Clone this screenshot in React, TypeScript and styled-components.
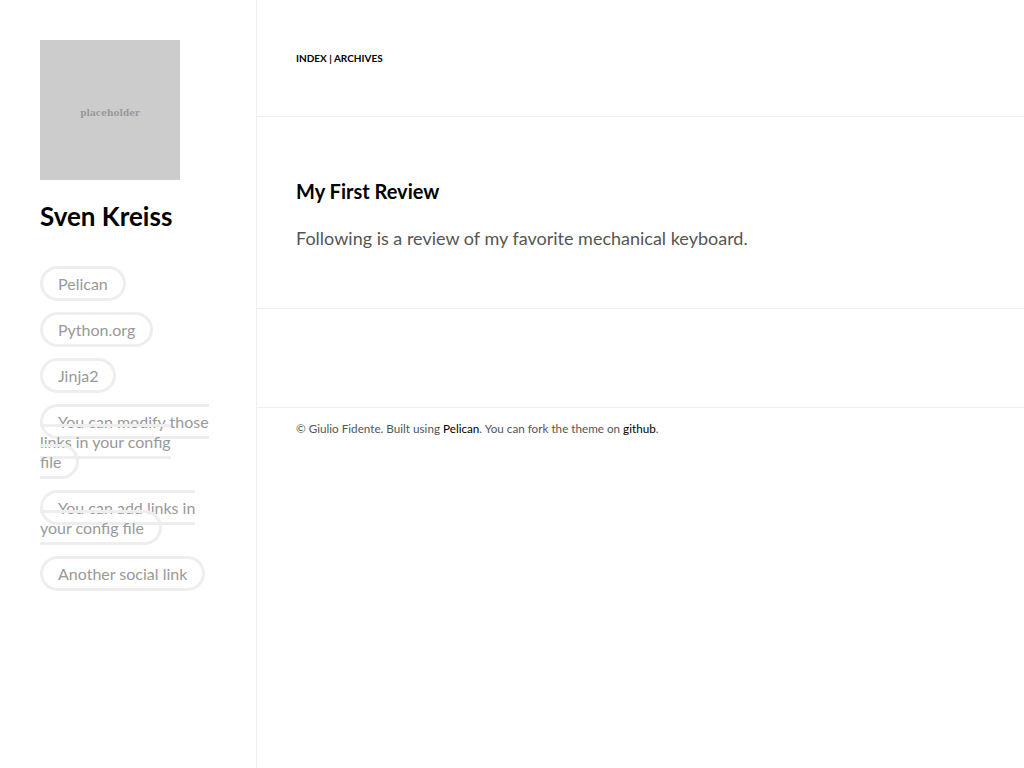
import React from "react";
import styled, { createGlobalStyle } from "styled-components";

const GlobalStyle = createGlobalStyle`
  html, body { margin: 0; padding: 0; background: #fff; }
  body { font-family: Lato, "Open Sans", sans-serif; color: #555; }
  * { box-sizing: border-box; }
`;

const Page = styled.div`
  display: flex;
  min-height: 100vh;
`;

const Sidebar = styled.aside`
  width: 257px;
  flex: none;
  padding: 40px 46px 40px 40px;
  border-right: 1px solid #eee;
`;

const Placeholder = styled.div`
  width: 140px;
  height: 140px;
  background: #ccc;
  display: flex;
  align-items: center;
  justify-content: center;
  color: #999;
  font-family: "DejaVu Serif Condensed", "DejaVu Serif", serif;
  font-stretch: condensed;
  font-weight: bold;
  font-size: 10px;
  padding-top: 4px;
`;

const Name = styled.h1`
  margin: 18px 0 40px;
  font-size: 26px;
  line-height: 36px;
  font-weight: bold;
  color: #000;
`;

const LinkList = styled.ul`
  list-style: none;
  margin: 0;
  padding: 0;
`;

const LinkItem = styled.li`
  display: block;
  line-height: 20px;
  margin-bottom: 26px;
  font-size: 16px;
`;

const Pill = styled.a`
  display: inline;
  color: #999;
  text-decoration: none;
  border: 3px solid #eee;
  border-radius: 20px;
  padding: 5.4px 15px;
`;

const Main = styled.main`
  flex: 1;
  display: flex;
  flex-direction: column;
`;

const Header = styled.header`
  padding: 40px 39px;
  line-height: 36px;
  border-bottom: 1px solid #eee;
  font-size: 10px;
  font-weight: bold;
  text-transform: uppercase;
  color: #000;
`;

const NavLink = styled.a`
  color: #000;
  text-decoration: none;
`;

const Article = styled.article`
  padding: 40px 39px;
  border-bottom: 1px solid #eee;
`;

const Title = styled.h2`
  margin: 19px 0 18px;
  font-size: 20px;
  line-height: 30px;
  font-weight: bold;
  color: #000;
`;

const Body = styled.p`
  margin: 0 0 16px;
  font-size: 18px;
  line-height: 28px;
  color: #555;
`;

const Comments = styled.section`
  height: 99px;
  border-bottom: 1px solid #eee;
`;

const Footer = styled.footer`
  padding: 10px 39px;
  font-size: 11.7px;
  line-height: 20px;
  color: #555;
`;

const FooterLink = styled.a`
  color: #000;
  text-decoration: none;
`;

const links = [
  "Pelican",
  "Python.org",
  "Jinja2",
  "You can modify those links in your config file",
  "You can add links in your config file",
  "Another social link",
];

export default function App() {
  return (
    <>
      <GlobalStyle />
      <Page>
        <Sidebar>
          <Placeholder>placeholder</Placeholder>
          <Name>Sven Kreiss</Name>
          <nav>
            <LinkList>
              {links.map((l) => (
                <LinkItem key={l}>
                  <Pill href="#">{l}</Pill>
                </LinkItem>
              ))}
            </LinkList>
          </nav>
        </Sidebar>
        <Main>
          <Header>
            <NavLink href="#">Index</NavLink> | <NavLink href="#">Archives</NavLink>
          </Header>
          <Article>
            <Title>My First Review</Title>
            <Body>Following is a review of my favorite mechanical keyboard.</Body>
          </Article>
          <Comments />
          <Footer>
            © Giulio Fidente. Built using <FooterLink href="#">Pelican</FooterLink>. You can fork the theme on{" "}
            <FooterLink href="#">github</FooterLink>.
          </Footer>
        </Main>
      </Page>
    </>
  );
}
